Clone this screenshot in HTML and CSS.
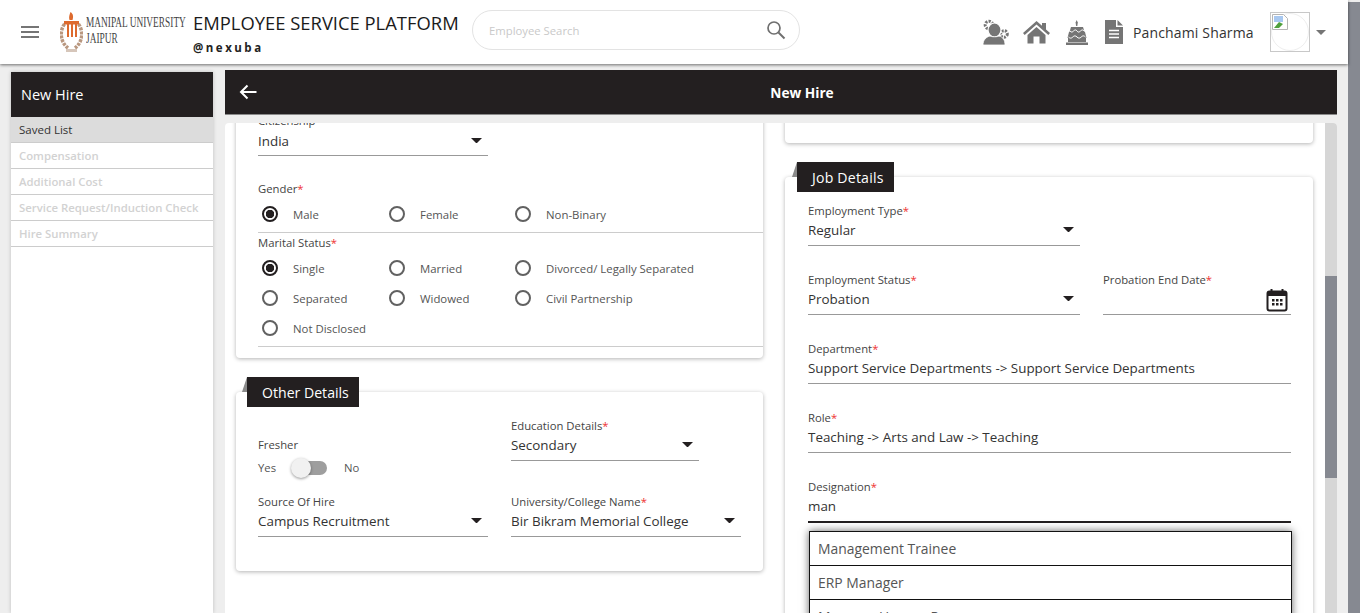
FILE: index.html
```html
<!DOCTYPE html>
<html lang="en">
<head>
<meta charset="utf-8">
<title>New Hire</title>
<link rel="stylesheet" href="styles.css">
</head>
<body>
<div class="app">
  <div class="page">
    <header class="topbar">
      <button class="menu" aria-label="Menu"><span></span><span></span><span></span></button>
      <div class="brand">
        <svg class="emblem" width="23" height="42" viewBox="0 0 23 42">
          <path d="M4.500 12C-.5 19 0 30 8 36" fill="none" stroke="#b9977f" stroke-width="3.500" stroke-dasharray="3 1"/>
          <path d="M18.500 12C23.500 19 23 30 15 36" fill="none" stroke="#b9977f" stroke-width="3.500" stroke-dasharray="3 1"/>
          <path d="M10.500 0c3 2 3 5 2 8h-3c-1-3 0-5 1-8z" fill="#dd6a2e"/>
          <path d="M4 9h15v3.500h-2V25h-2V12.500h-2V25h-2V12.500H9V25H7V12.500H4z" fill="#dd6a2e"/>
          <path d="M6 37h11v3H6z" fill="#d6c6ba"/>
        </svg>
        <div class="uni"><span>MANIPAL UNIVERSITY</span><span>JAIPUR</span></div>
      </div>
      <div class="product">
        <div class="product-name">EMPLOYEE SERVICE PLATFORM</div>
        <div class="product-by">@nexuba</div>
      </div>
      <div class="search">
        <span class="search-text">Employee Search</span>
        <svg width="20" height="20" viewBox="0 0 20 20"><circle cx="8" cy="8" r="6" fill="none" stroke="#6f6f6f" stroke-width="1.700"/><path d="M12.500 12.500l6 6" stroke="#6f6f6f" stroke-width="2"/></svg>
      </div>
      <div class="tools">
        <svg class="tool-a" width="26" height="26" viewBox="0 0 26 26" fill="#757575">
          <circle cx="6" cy="6" r="3.800" fill="none" stroke="#757575" stroke-width="3" stroke-dasharray="2.200 1.200"/>
          <circle cx="21" cy="15" r="3.300" fill="none" stroke="#757575" stroke-width="3" stroke-dasharray="2 1.200"/>
          <ellipse cx="11.500" cy="11" rx="6.500" ry="7" stroke="#fff" stroke-width="1.200"/>
          <path d="M0 26c0-5 3-8 7-9 1 1 8 1 9 0 4 1 6 4 6 9z" stroke="#fff" stroke-width=".8"/>
        </svg>
        <svg class="tool-b" width="27" height="24" viewBox="0 0 27 24" fill="#757575">
          <path d="M13.500 1L0 13l1.700 2L13.500 4.600 25.300 15l1.700-2-4-3.600V3h-4v2.800z"/>
          <path d="M4.500 15L13.500 7l9 8v8.500h-6v-7h-6v7h-6z"/>
        </svg>
        <svg class="tool-c" width="22" height="25" viewBox="0 0 22 25" fill="#757575">
          <path d="M10.700 0l1.100 2.500-.5 3.500h-1.200l-.5-3.500z"/>
          <path d="M5 7h12l1.500 5h-15z"/>
          <path d="M3 12h16l1.500 6h-19z"/>
          <path d="M2 18h18v4H2zM0 22.500h22V25H0z"/>
          <path d="M4 11c1.500 1.500 2.500 1.500 3.500 0s2.500-1.500 3.500 0 2.500 1.500 3.500 0 2.500-1.500 3.500 0M2.500 17c1.500 1.500 3 1.500 4.300 0s2.800-1.500 4.200 0 2.800 1.500 4.200 0 2.800-1.500 4.300 0" fill="none" stroke="#fff" stroke-width="1"/>
        </svg>
        <svg class="tool-d" width="18" height="24" viewBox="0 0 18 24">
          <path d="M0 0h11v7h7v17H0z" fill="#757575"/>
          <path d="M12.500 0L18 5.500h-5.500z" fill="#757575"/>
          <path d="M4 10.500h10M4 14h10M4 17.500h10" stroke="#fff" stroke-width="1.500"/>
        </svg>
        <span class="user">Panchami Sharma</span>
        <div class="avatar">
          <svg class="broken" width="16" height="16" viewBox="0 0 16 16">
            <path d="M.5.500h11l4 4v11H.5z" fill="#fff" stroke="#b5b5b5"/>
            <path d="M2 2h9v6H2z" fill="#a8c8f0"/>
            <path d="M2 14l5-6 4 2-4 4z" fill="#4fa03c"/>
          </svg>
        </div>
        <span class="caret-grey"></span>
      </div>
    </header>

    <div class="workspace">
      <nav class="sidebar">
        <div class="sidebar-head">New Hire</div>
        <a class="side-item active">Saved List</a>
        <a class="side-item">Compensation</a>
        <a class="side-item">Additional Cost</a>
        <a class="side-item">Service Request/Induction Check</a>
        <a class="side-item">Hire Summary</a>
      </nav>

      <main class="main">
        <div class="bar">
          <span class="back">
            <svg width="18" height="16" viewBox="0 0 18 16"><path d="M17.500 8H2M8.500 1.500L2 8l6.500 6.500" fill="none" stroke="#fff" stroke-width="2"/></svg>
          </span>
          <span class="bar-title">New Hire</span>
        </div>

        <div class="panel">
          <div class="columns">
            <div class="col col-left">
              <section class="card card-personal">
                <div class="field w230">
                  <label class="lbl">Citizenship</label>
                  <div class="val"><span>India</span><i class="caret"></i></div>
                </div>
                <div class="group group-gender">
                  <div class="lbl">Gender<b>*</b></div>
                  <div class="radios">
                    <span class="radio on">Male</span>
                    <span class="radio">Female</span>
                    <span class="radio">Non-Binary</span>
                  </div>
                </div>
                <div class="group group-marital">
                  <div class="lbl">Marital Status<b>*</b></div>
                  <div class="radios">
                    <span class="radio on">Single</span>
                    <span class="radio">Married</span>
                    <span class="radio">Divorced/ Legally Separated</span>
                    <span class="radio">Separated</span>
                    <span class="radio">Widowed</span>
                    <span class="radio">Civil Partnership</span>
                    <span class="radio">Not Disclosed</span>
                  </div>
                </div>
              </section>

              <section class="card card-other">
                <h2 class="tab">Other Details</h2>
                <div class="other-grid">
                  <div class="fresher">
                    <div class="lbl">Fresher</div>
                    <div class="switch-row">
                      <span>Yes</span>
                      <span class="switch"><i></i></span>
                      <span>No</span>
                    </div>
                  </div>
                  <div class="field w188">
                    <label class="lbl">Education Details<b>*</b></label>
                    <div class="val"><span>Secondary</span><i class="caret"></i></div>
                  </div>
                  <div class="field">
                    <label class="lbl">Source Of Hire</label>
                    <div class="val"><span>Campus Recruitment</span><i class="caret"></i></div>
                  </div>
                  <div class="field">
                    <label class="lbl">University/College Name<b>*</b></label>
                    <div class="val"><span>Bir Bikram Memorial College</span><i class="caret"></i></div>
                  </div>
                </div>
              </section>
            </div>

            <div class="col col-right">
              <section class="card card-stub"></section>
              <section class="card card-job">
                <h2 class="tab">Job Details</h2>
                <div class="job-grid">
                  <div class="field">
                    <label class="lbl">Employment Type<b>*</b></label>
                    <div class="val"><span>Regular</span><i class="caret"></i></div>
                  </div>
                  <div></div>
                  <div class="field">
                    <label class="lbl">Employment Status<b>*</b></label>
                    <div class="val"><span>Probation</span><i class="caret"></i></div>
                  </div>
                  <div class="field">
                    <label class="lbl">Probation End Date<b>*</b></label>
                    <div class="val val-date">
                      <span></span>
                      <svg width="22" height="24" viewBox="0 0 22 24" fill="none">
                        <rect x="1.500" y="3.500" width="19" height="19" rx="2" stroke="#231f20" stroke-width="2"/>
                        <path d="M1.500 4h19v4h-19z" fill="#231f20"/>
                        <path d="M5.500 1v4M16.500 1v4" stroke="#231f20" stroke-width="2"/>
                        <path d="M6 11h2.500v2.500H6zM10 11h2.500v2.500H10zM14 11h2.500v2.500H14zM6 15h2.500v2.500H6zM10 15h2.500v2.500H10zM14 15h2.500v2.500H14z" fill="#231f20"/>
                      </svg>
                    </div>
                  </div>
                  <div class="field span2">
                    <label class="lbl">Department<b>*</b></label>
                    <div class="val"><span>Support Service Departments -&gt; Support Service Departments</span></div>
                  </div>
                  <div class="field span2">
                    <label class="lbl">Role<b>*</b></label>
                    <div class="val"><span>Teaching -&gt; Arts and Law -&gt; Teaching</span></div>
                  </div>
                  <div class="field span2 field-focus">
                    <label class="lbl">Designation<b>*</b></label>
                    <div class="val"><span>man</span></div>
                    <ul class="suggest">
                      <li>Management Trainee</li>
                      <li>ERP Manager</li>
                      <li>Manager Human Resources</li>
                    </ul>
                  </div>
                </div>
              </section>
            </div>
          </div>
          <div class="inner-scroll"><i></i></div>
        </div>
      </main>
    </div>
  </div>
  <div class="page-scroll"></div>
</div>
</body>
</html>
```
FILE: styles.css
```css
*, *::before, *::after { box-sizing: border-box; }
html, body { margin: 0; height: 100%; overflow: hidden; }
body { font-family: "Open Sans", "Noto Sans", sans-serif; color: #333; background: #eee; }

.app { display: flex; height: 613px; }
.page { flex: 1; min-width: 0; display: flex; flex-direction: column; }
.page-scroll { width: 12px; background: #868991; border-top: 2px solid #eee; }

/* top bar */
.topbar { height: 64px; flex: none; background: #fff; display: flex; align-items: center; box-shadow: 0 1px 3px rgba(0,0,0,.55); position: relative; z-index: 2; }
.menu { width: 18px; height: 12px; margin-left: 21px; padding: 0; border: 0; background: none; display: flex; flex-direction: column; justify-content: space-between; }
.menu span { display: block; height: 2px; background: #757575; }
.brand { display: flex; align-items: center; margin-left: 21px; width: 133px; }
.emblem { flex: none; margin-top: 2px; }
.uni { display: flex; flex-direction: column; margin-left: 3px; margin-top: -5px; font-family: "Liberation Serif", serif; font-size: 14.5px; line-height: 16px; color: #444; white-space: nowrap; transform: scaleX(.645); transform-origin: left center; }
.product { margin-top: 3px; }
.product-name { font-size: 18.400px; line-height: 24px; color: #1b1b1b; white-space: nowrap; }
.product-by { font-size: 11.500px; line-height: 16px; font-weight: 700; letter-spacing: 2.500px; color: #222; margin-top: 5px; }
.search { position: absolute; left: 472px; top: 10px; width: 328px; height: 40px; border: 1px solid #e3e3e3; border-radius: 20px; display: flex; align-items: center; justify-content: space-between; padding: 0 13px 0 16px; }
.search-text { font-size: 11.300px; color: #c9c9c9; }
.tools { margin-left: auto; display: flex; align-items: center; padding-right: 22px; }
.tool-a { margin-right: 14px; }
.tool-b { margin-right: 16px; }
.tool-c { margin-right: 17px; }
.tool-d { margin-right: 10px; }
.user { font-size: 14px; color: #333; letter-spacing: .15px; width: 137px; white-space: nowrap; }
.avatar { width: 40px; height: 40px; border: 1px solid #c8c8c8; position: relative; }
.avatar::after { content: ""; position: absolute; inset: 0; border: 1px solid #eee; border-radius: 50%; }
.broken { position: absolute; left: 1px; top: 1px; z-index: 1; }
.caret-grey { margin-left: 6px; width: 10px; height: 5px; border: 5px solid transparent; border-top: 5px solid #757575; border-bottom: 0; }

/* layout */
.workspace { flex: 1; min-height: 0; display: flex; gap: 12px; padding-left: 11px; padding-right: 11px; }
.sidebar { width: 202px; flex: none; margin-top: 8px; background: #fff; box-shadow: 0 0 4px rgba(0,0,0,.2); }
.sidebar-head { height: 45px; background: #231f20; color: #fff; font-size: 14.500px; display: flex; align-items: center; padding-left: 10px; }
.side-item { display: flex; align-items: center; height: 26px; padding-left: 8px; font-size: 11.350px; font-weight: 600; color: #d2d2d2; border-bottom: 1px solid #ccc; white-space: nowrap; }
.side-item.active { background: #dcdcdc; color: #333; font-weight: 400; font-size: 11.500px; }

.main { flex: 1; min-width: 0; margin-top: 6px; display: flex; flex-direction: column; }
.bar { height: 45px; flex: none; background: #231f20; border-bottom: 1px solid #8a8a8a; display: flex; align-items: center; color: #fff; }
.back { width: 42px; padding-left: 14px; display: flex; }
.bar-title { flex: 1; text-align: center; font-size: 13.700px; font-weight: 700; }

.panel { flex: 1; min-height: 0; margin-top: 8px; background: #fff; display: flex; overflow: hidden; border-radius: 4px 4px 0 0; }
.columns { flex: 1; min-width: 0; display: flex; gap: 22px; padding: 0 12px 0 11px; }
.col { min-width: 0; margin-top: -23px; }
.col-left { flex: none; width: 527px; }
.col-right { flex: none; width: 528px; }
.inner-scroll { width: 12px; flex: none; background: #d6d6d6; padding-top: 153px; }
.inner-scroll i { display: block; height: 202px; background: #868991; }

.card { background: #fff; border-radius: 4px; box-shadow: 0 1px 4px rgba(0,0,0,.3); position: relative; }
.card-personal { padding: 13px 0 11px 22px; }
.card-other { margin-top: 34px; padding: 26px 22px 34px; }
.card-stub { height: 43px; }
.card-job { margin-top: 34px; padding: 26px 22px 140px 23px; }

.tab { position: absolute; top: -15px; left: 11px; height: 30px; margin: 0; padding: 0 10px 0 15px; background: #231f20; color: #fff; font-size: 14.100px; font-weight: 400; display: flex; align-items: center; }
.tab::before { content: ""; position: absolute; left: -5px; top: 0; width: 5px; height: 15px; border-style: solid; border-width: 0 0 15px 5px; border-color: transparent transparent #8a8a8a transparent; }
.card-job .tab { left: 12px; letter-spacing: .2px; }

/* fields */
.lbl { display: block; font-size: 11.300px; line-height: 16px; color: #444; white-space: nowrap; }
.lbl b { color: #e33; font-weight: 400; }
.field { border-bottom: 1px solid #999; position: relative; }
.val { height: 26px; padding-bottom: 4px; display: flex; align-items: center; justify-content: space-between; font-size: 13.400px; color: #333; white-space: nowrap; }
.w230 .val { padding-bottom: 2px; }
.caret { width: 11px; height: 5.500px; margin-right: 6px; border: 5.500px solid transparent; border-top: 5.500px solid #231f20; border-bottom: 0; flex: none; }
.val-date svg { margin: 2px 3px 0 0; }
.w230 { width: 230px; }
.w188 { width: 188px; align-self: start; }
.span2 { grid-column: 1 / 3; }

.group-gender { margin-top: 25px; border-bottom: 1px solid #ccc; padding-bottom: 3px; }
.group-marital { margin-top: 2px; border-bottom: 1px solid #ccc; padding-bottom: 3px; }
.group-gender .lbl { margin-bottom: 2px; }
.group-marital .lbl { margin-bottom: 2px; }
.radios { display: grid; grid-template-columns: 127px 126px 1fr; grid-auto-rows: 30px; }
.radio { display: flex; align-items: center; gap: 15px; padding-left: 4px; font-size: 11.400px; color: #555; white-space: nowrap; }
.radio::before { content: ""; width: 16px; height: 16px; flex: none; border: 2px solid #616161; border-radius: 50%; }
.radio.on::before { border-color: #231f20; background: radial-gradient(circle, #231f20 0 4px, #fff 4.500px); }

.other-grid { display: grid; grid-template-columns: 230px 230px; column-gap: 23px; row-gap: 16px; }
.fresher { padding-top: 19px; }
.switch-row { display: flex; align-items: center; height: 21px; margin-top: 4px; font-size: 11.300px; color: #555; }
.switch { width: 36px; height: 20px; margin: 1px 17px 0 15px; position: relative; display: block; }
.switch::before { content: ""; position: absolute; left: 10px; right: 0; top: 3px; height: 14px; border-radius: 7px; background: #9e9e9e; }
.switch i { position: absolute; left: 0; top: 0; width: 20px; height: 20px; border-radius: 50%; background: #f1f1f1; box-shadow: 0 1px 3px rgba(0,0,0,.4); }

.job-grid { display: grid; grid-template-columns: 272px 188px; column-gap: 23px; row-gap: 26px; }
.field-focus { border-bottom: 2px solid #231f20; }
.suggest { position: absolute; left: 1px; right: -1px; top: 52px; margin: 0; padding: 0; list-style: none; background: #fff; box-shadow: 0 0 8px rgba(0,0,0,.6); z-index: 1; }
.suggest li { height: 34px; padding-left: 8px; display: flex; align-items: center; border: 1px solid #111; border-bottom: 0; font-size: 13.900px; color: #555; }
```
